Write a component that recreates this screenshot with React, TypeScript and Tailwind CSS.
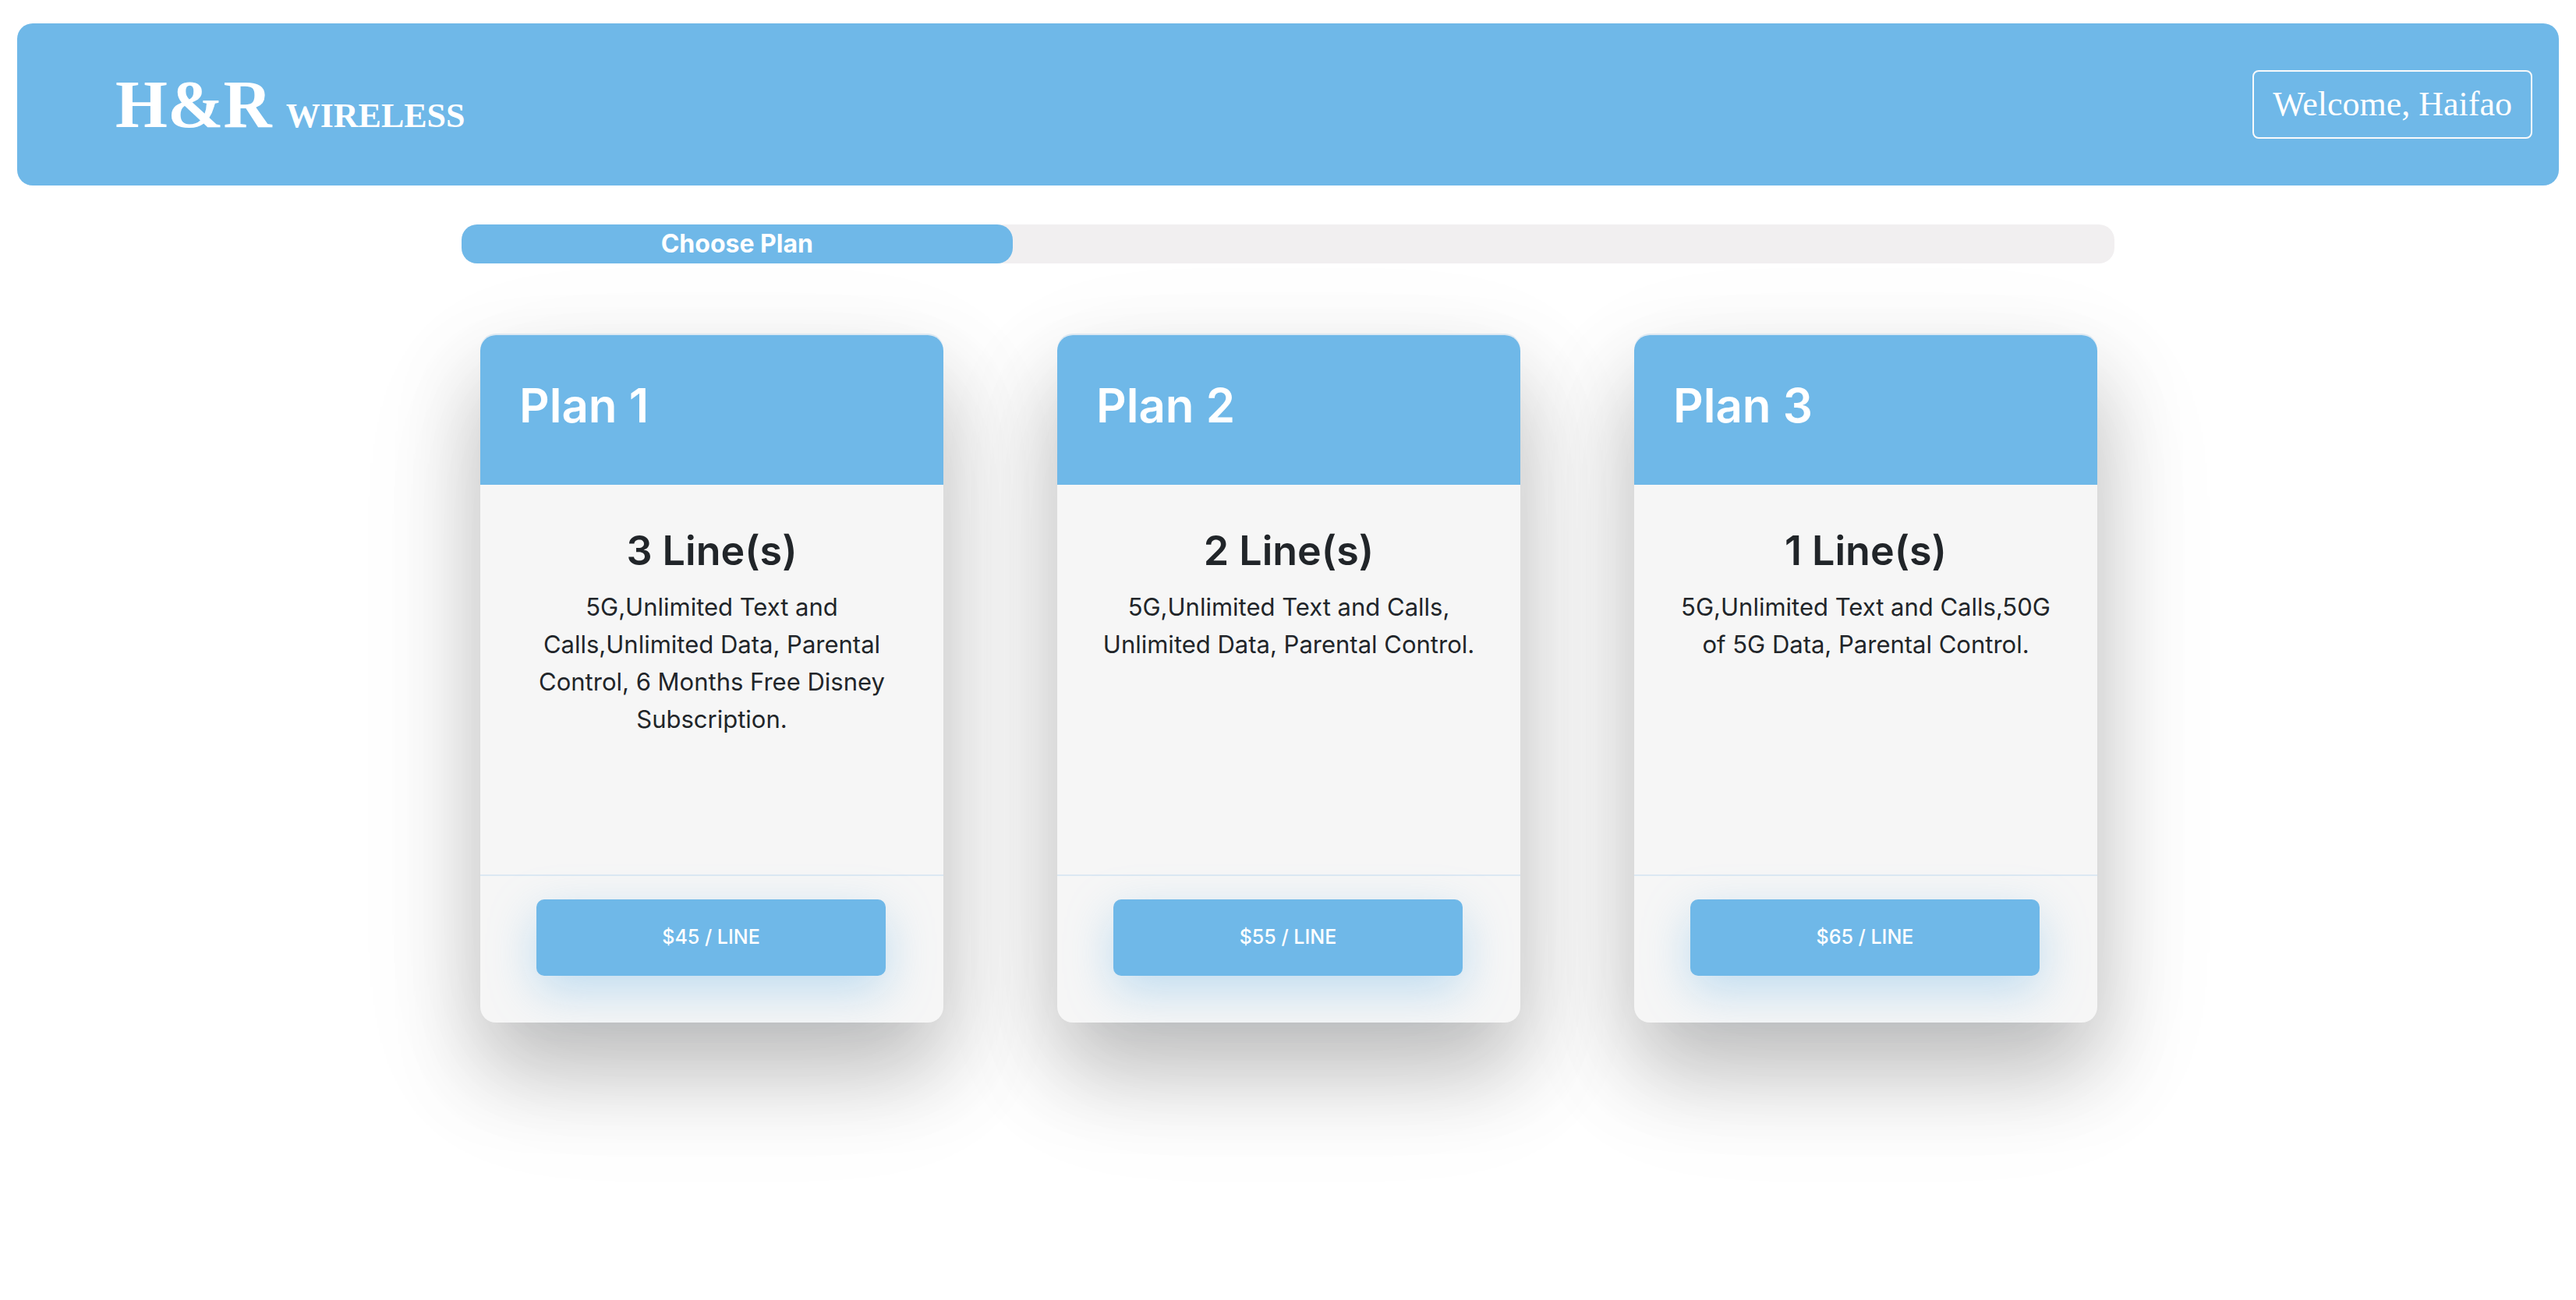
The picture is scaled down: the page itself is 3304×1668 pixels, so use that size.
const plans = [
  {
    name: "Plan 1",
    lines: "3 Line(s)",
    details:
      "5G,Unlimited Text and Calls,Unlimited Data, Parental Control, 6 Months Free Disney Subscription.",
    price: "$45 / LINE",
  },
  {
    name: "Plan 2",
    lines: "2 Line(s)",
    details: "5G,Unlimited Text and Calls, Unlimited Data, Parental Control.",
    price: "$55 / LINE",
  },
  {
    name: "Plan 3",
    lines: "1 Line(s)",
    details: "5G,Unlimited Text and Calls,50G of 5G Data, Parental Control.",
    price: "$65 / LINE",
  },
];

function Header() {
  return (
    <header className="flex h-52 items-center justify-between rounded-[20px] bg-[#6fb8e8] pr-[34px] pl-[126px] font-['Liberation_Serif',serif] text-white">
      <a href="#" className="flex items-baseline gap-[18px] font-bold">
        <span className="text-[86px] leading-[96px]">H&amp;R</span>
        <span className="text-[44px]">WIRELESS</span>
      </a>
      <button
        type="button"
        className="h-[88px] rounded-lg border-2 border-gray-50 px-6 text-[44px] leading-none"
      >
        Welcome, Haifao
      </button>
    </header>
  );
}

function Progress() {
  return (
    <div className="h-[50px] rounded-[20px] bg-[#f1eff0]">
      <div className="flex h-full w-1/3 items-center justify-center rounded-[20px] bg-[#6fb8e8] text-[32px] leading-[48px] font-bold text-white">
        Choose Plan
      </div>
    </div>
  );
}

function PlanCard({ plan }: { plan: (typeof plans)[number] }) {
  return (
    <article className="flex flex-col rounded-[20px] border-t-2 border-[#dce8f2] bg-[#f6f6f6] shadow-[0_60px_110px_rgba(0,0,0,0.22),0_60px_180px_rgba(0,0,0,0.08)]">
      <h2 className="h-48 rounded-t-[20px] bg-[#6fb8e8] px-[50px] pt-[52px] text-[60px] leading-[77px] font-semibold text-white">
        {plan.name}
      </h2>
      <div className="min-h-[500px] px-12 pt-[50px] text-center">
        <h3 className="text-[52px] leading-[70px] font-semibold">{plan.lines}</h3>
        <p className="mt-[13px] text-[31px] leading-[48px]">{plan.details}</p>
      </div>
      <div className="border-t-2 border-[#dce8f2] pt-[30px] pr-[74px] pb-[60px] pl-[72px]">
        <button
          type="button"
          className="h-[98px] w-full rounded-[10px] bg-[#6fb8e8] text-[25px] font-medium text-white shadow-[0_20px_60px_rgba(110,183,232,0.4)]"
        >
          {plan.price}
        </button>
      </div>
    </article>
  );
}

export default function App() {
  return (
    <div className="min-h-screen bg-white px-[22px] pt-[30px] pb-12 font-['Inter',sans-serif] text-[#212529]">
      <Header />
      <main className="mx-auto mt-[50px] max-w-[2120px]">
        <Progress />
        <section className="mt-[90px] grid grid-cols-3 gap-[146px] pr-[22px] pl-6">
          {plans.map((plan) => (
            <PlanCard key={plan.name} plan={plan} />
          ))}
        </section>
      </main>
    </div>
  );
}
